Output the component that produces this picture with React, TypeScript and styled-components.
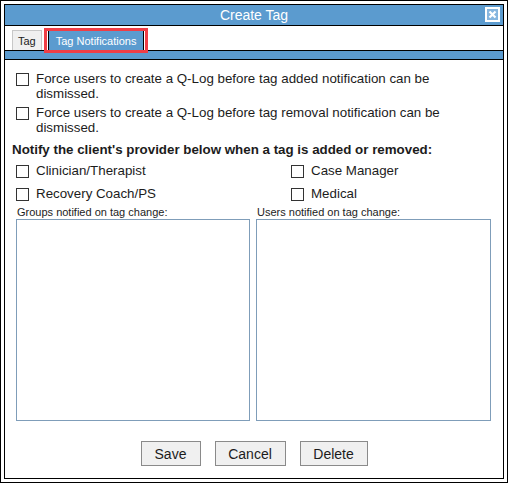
import React from 'react';
import styled, { createGlobalStyle } from 'styled-components';

const Global = createGlobalStyle`
    html, body {
        margin: 0;
        padding: 0;
        background: #fff;
    }
    * {
        box-sizing: border-box;
    }
`;

const BLUE = '#5b9bcf';

const Frame = styled.div`
    width: 508px;
    height: 483px;
    border: 1px solid #000;
    padding: 3px;
    background: #fff;
    font-family: "Liberation Sans", Arial, sans-serif;
    color: #1c1c1c;
`;

const Dialog = styled.div`
    height: 100%;
    border: 1px solid #000;
    display: flex;
    flex-direction: column;
`;

const TitleBar = styled.div`
    position: relative;
    height: 21px;
    background: ${BLUE};
    border-bottom: 1px solid #000;
    display: flex;
    align-items: center;
    justify-content: center;
    color: #fff;
    font-size: 14px;
`;

const CloseButton = styled.span`
    position: absolute;
    right: 3px;
    top: 2px;
    width: 15px;
    height: 15px;
    border: 2px solid #fff;
    background: #86b6df;
    display: flex;
    align-items: center;
    justify-content: center;
`;

const TabRow = styled.div`
    height: 24px;
    display: flex;
    align-items: flex-end;
    gap: 6px;
    padding-left: 7px;
`;

const Tab = styled.div<{ $active?: boolean }>`
    position: relative;
    height: 20px;
    padding: 0 ${p => (p.$active ? 7 : 5)}px;
    display: flex;
    align-items: center;
    font-size: 11px;
    background: ${p => (p.$active ? BLUE : '#f0f0f0')};
    color: ${p => (p.$active ? '#fff' : '#222')};
    border: 1px solid ${p => (p.$active ? '#000' : '#c8c8c8')};
    border-bottom: none;
`;

// red annotation frame drawn round the active tab
const Highlight = styled.span`
    position: absolute;
    left: -5px;
    right: -5px;
    top: -3px;
    bottom: -3px;
    border: 3px solid #ef3e46;
    pointer-events: none;
`;

const Strip = styled.div`
    height: 10px;
    background: ${BLUE};
    border-top: 1px solid #000;
    border-bottom: 1px solid #000;
`;

const Content = styled.div`
    flex: 1;
    display: flex;
    flex-direction: column;
    padding: 11px 12px 0 7px;
    font-size: 13.33px;
`;

const CheckRow = styled.label`
    display: flex;
    align-items: flex-start;
    gap: 7px;
    padding-left: 4px;
    line-height: 15px;
    margin-bottom: 4px;
`;

const CheckText = styled.span`
    max-width: 420px;
`;

const Box = styled.span`
    flex: none;
    width: 13px;
    height: 13px;
    margin-top: 2px;
    border: 1px solid #333;
    background: #fff;
`;

const Heading = styled.div`
    font-weight: bold;
    line-height: 15px;
    margin: 3px 0 6px;
`;

const RoleGrid = styled.div`
    display: grid;
    grid-template-columns: 275px 1fr;
    row-gap: 8px;
    & > label {
        margin-bottom: 0;
    }
`;

const Lists = styled.div`
    display: grid;
    grid-template-columns: 234px 235px;
    gap: 6px;
    padding-left: 4px;
    margin-top: 5px;
`;

const ListColumn = styled.div`
    display: flex;
    flex-direction: column;
`;

const ListLabel = styled.div`
    font-size: 11px;
    line-height: 13px;
    padding-left: 1px;
    height: 13px;
`;

const ListBox = styled.div`
    height: 202px;
    border: 1px solid #7f9db9;
    background: #fff;
`;

const Buttons = styled.div`
    display: flex;
    justify-content: center;
    gap: 14px;
    margin-top: 20px;
    padding-left: 5px;
`;

const Button = styled.button<{ $w: number }>`
    width: ${p => p.$w}px;
    height: 25px;
    background: #f0f0f0;
    border: 1px solid #8a8a8a;
    font-family: "Liberation Sans", Arial, sans-serif;
    font-size: 14px;
    color: #1c1c1c;
    padding: 0;
`;

function Check({ children }: { children: React.ReactNode }) {
    return <CheckRow>
        <Box />
        <CheckText>{children}</CheckText>
    </CheckRow>;
}

export default function App() {
    return <>
        <Global />
        <Frame>
            <Dialog>
                <TitleBar>
                    Create Tag
                    <CloseButton>
                        <svg width="9" height="9" viewBox="0 0 9 9">
                            <path d="M1.5 1.5 L7.5 7.5 M7.5 1.5 L1.5 7.5" stroke="#fff" strokeWidth="2.2" />
                        </svg>
                    </CloseButton>
                </TitleBar>
                <TabRow>
                    <Tab>Tag</Tab>
                    <Tab $active>
                        Tag Notifications
                        <Highlight />
                    </Tab>
                </TabRow>
                <Strip />
                <Content>
                    <Check>Force users to create a Q-Log before tag added notification can be dismissed.</Check>
                    <Check>Force users to create a Q-Log before tag removal notification can be dismissed.</Check>
                    <Heading>Notify the client's provider below when a tag is added or removed:</Heading>
                    <RoleGrid>
                        <Check>Clinician/Therapist</Check>
                        <Check>Case Manager</Check>
                        <Check>Recovery Coach/PS</Check>
                        <Check>Medical</Check>
                    </RoleGrid>
                    <Lists>
                        <ListColumn>
                            <ListLabel>Groups notified on tag change:</ListLabel>
                            <ListBox />
                        </ListColumn>
                        <ListColumn>
                            <ListLabel>Users notified on tag change:</ListLabel>
                            <ListBox />
                        </ListColumn>
                    </Lists>
                    <Buttons>
                        <Button $w={60}>Save</Button>
                        <Button $w={71}>Cancel</Button>
                        <Button $w={68}>Delete</Button>
                    </Buttons>
                </Content>
            </Dialog>
        </Frame>
    </>;
}
